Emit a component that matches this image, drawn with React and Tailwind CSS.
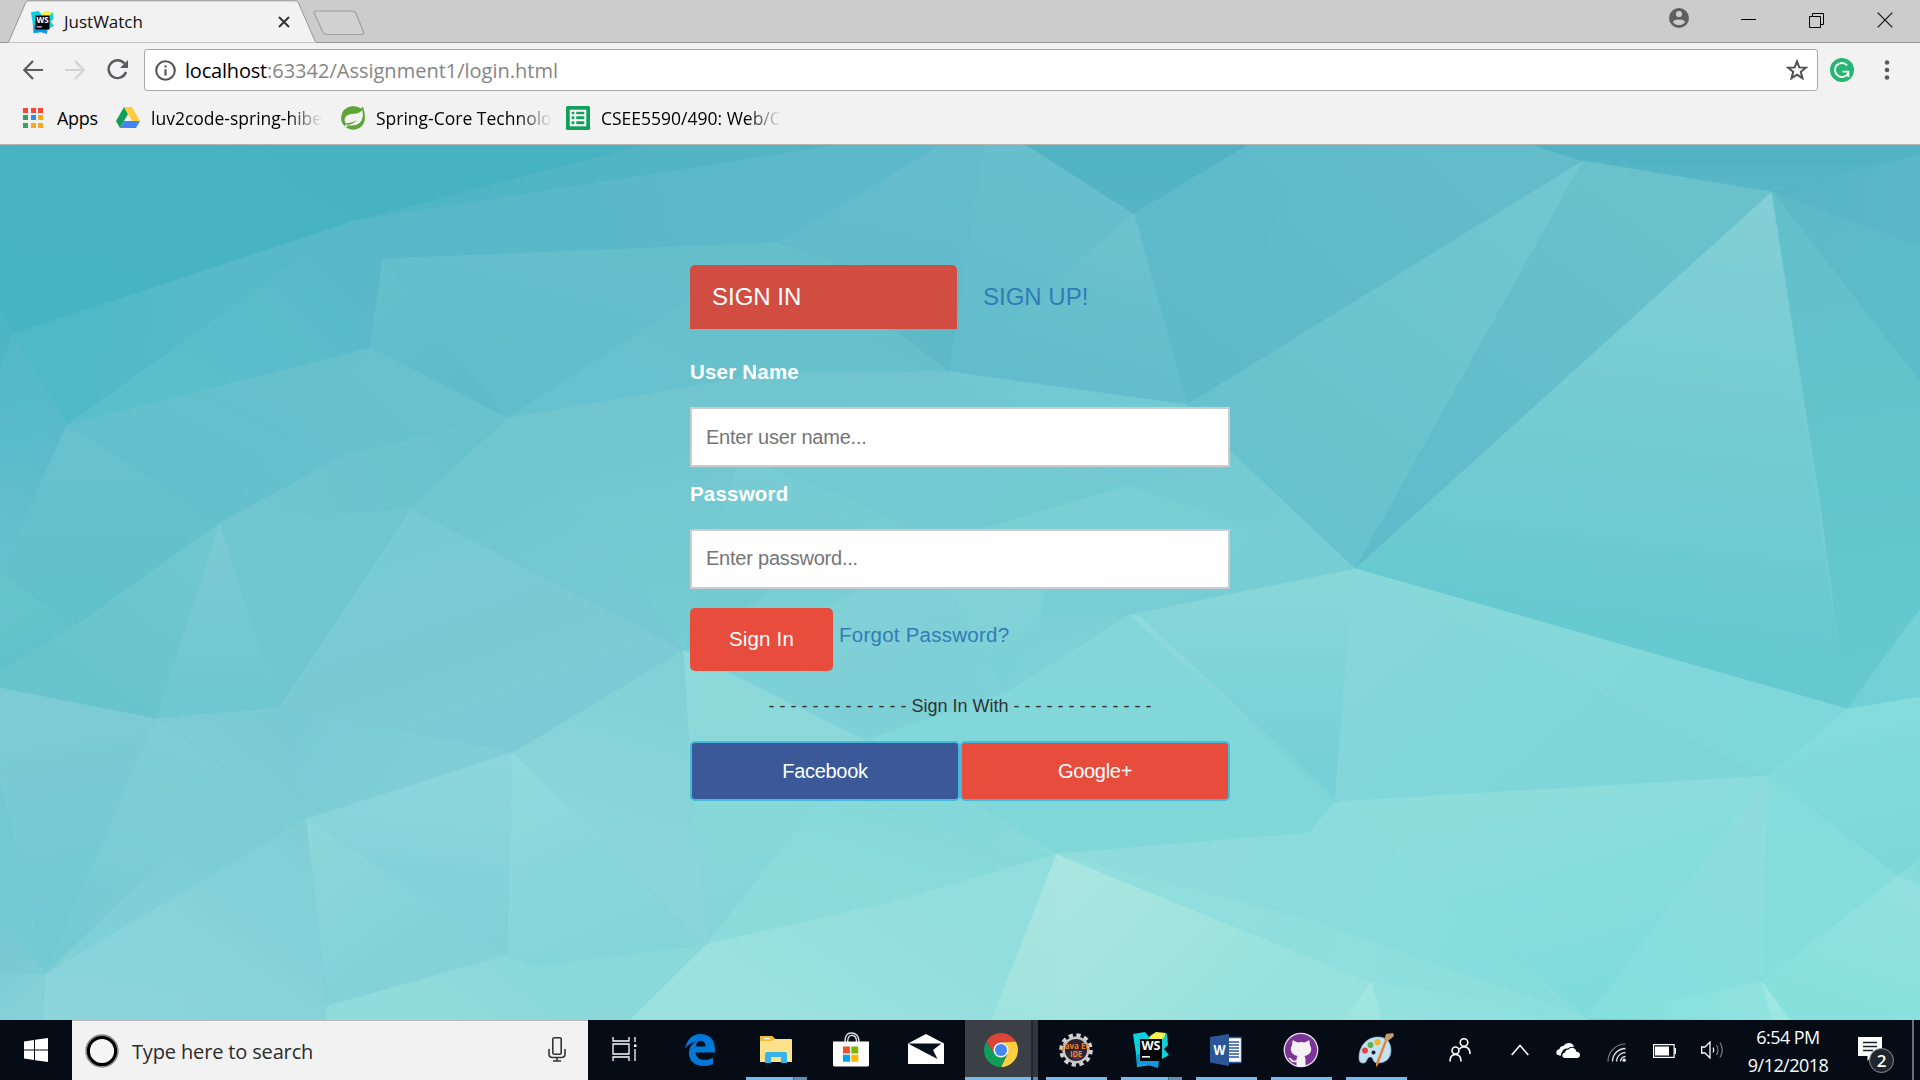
import React from "react";

/* Facets of the low-poly wallpaper: points, gradient line, start and end colour. */
const FACETS = [
  ["0,145 646,145 355,221 13,334 0,333", [300, 145, 60, 330], "#47b2c1", "#4ab6c4"],
  ["0,145 205,145 355,221 13,334 0,333", [100, 145, 60, 330], "#48b3c2", "#46b4c3"],
  ["0,305 13,334 0,333", [0, 305, 13, 334], "#4cb6c5", "#4cb6c5"],
  ["0,333 13,334 0,372", [0, 333, 8, 370], "#4bb4c3", "#50b7c6"],
  ["646,145 840,145 355,221", [640, 145, 500, 200], "#53b5c4", "#50b5c5"],
  ["355,221 840,145 942,145 778,243 383,259", [850, 150, 400, 250], "#5cb9c9", "#58b8c8"],
  ["942,145 985,145 960,303 949,372 778,243", [940, 160, 900, 340], "#65bdcc", "#5fbaca"],
  ["778,243 960,300 949,372", [800, 250, 950, 370], "#63bdcb", "#5cb8c8"],
  ["984,145 1027,145 1134,214 949,372 960,303", [1040, 150, 950, 370], "#68bfcc", "#62bccb"],
  ["1027,145 1248,145 1134,214", [1130, 145, 1130, 214], "#50b2c2", "#55b5c5"],
  ["1248,145 1535,145 1583,161 1187,405 1134,214", [1400, 145, 1200, 400], "#61bccb", "#5cb9c8"],
  ["1312,145 1535,145 1583,161 1255,363 1262,252", [1450, 150, 1240, 350], "#62bcca", "#5ebac9"],
  ["1134,214 1187,405 949,372", [1130, 220, 1080, 400], "#6dc2cd", "#62bccb"],
  ["1535,145 1920,145 1920,247 1772,192 1583,161", [1750, 145, 1750, 200], "#50b2c3", "#5ab8c7"],
  ["1772,192 1920,155 1920,247", [1780, 190, 1920, 200], "#56b5c5", "#5ab8c8"],
  ["1583,161 1187,405 1230,451 1355,569", [1580, 161, 1300, 520], "#73c7d0", "#66c2cd"],
  ["1583,161 1772,192 1355,569", [1650, 200, 1380, 560], "#69c1cb", "#5ebccb"],
  ["1772,192 1355,569 1847,709", [1740, 200, 1680, 660], "#82cfd5", "#65c9cf"],
  ["1772,192 1920,247 1920,382", [1800, 200, 1920, 340], "#5cbac8", "#5dbcc9"],
  ["1772,192 1920,382 1920,609 1847,709 1820,500", [1800, 240, 1870, 680], "#62c0ca", "#65c9cf"],
  ["1847,709 1920,609 1920,697", [1847, 709, 1920, 640], "#70d0d5", "#74d1d6"],
  ["67,425 13,334 0,370 0,465", [10, 340, 30, 450], "#54b8c7", "#5abccb"],
  ["13,334 355,221 67,425", [100, 300, 220, 320], "#50b9c7", "#58bac8"],
  ["355,221 383,259 370,348 67,425", [350, 230, 200, 390], "#59b8c8", "#5bbecb"],
  ["383,259 370,348 508,418", [380, 270, 480, 400], "#64c0cb", "#5dbac9"],
  ["383,259 778,243 508,418", [560, 240, 510, 418], "#65bfcb", "#60bdcb"],
  ["778,243 949,372 771,373 508,418", [780, 250, 700, 400], "#66c0cb", "#66c2ce"],
  ["508,418 771,373 949,372 1187,405 1230,451 1355,569 1130,486 1040,620 684,650 411,509", [700, 400, 750, 640], "#70c5cf", "#78ccd3"],
  ["370,348 67,425 220,523", [300, 360, 220, 520], "#66c1cc", "#62c0cd"],
  ["370,348 508,418 345,455 220,523", [400, 370, 250, 520], "#68c2cd", "#64c0cd"],
  ["508,418 411,509 220,523 345,455", [480, 430, 260, 520], "#68c2ce", "#70c5d0"],
  ["67,425 0,465 0,575 70,440", [50, 430, 10, 550], "#5abac9", "#64c1ce"],
  ["67,425 220,523 77,625 0,575", [100, 440, 100, 610], "#67c2cd", "#61c1cb"],
  ["0,575 77,625 0,672", [0, 575, 40, 650], "#66c5cd", "#62c2cb"],
  ["220,523 77,625 0,672 0,688 156,719", [210, 530, 80, 700], "#70c7d0", "#67c4cc"],
  ["220,523 156,719 279,708", [220, 530, 220, 710], "#7ccad4", "#6ec7d1"],
  ["220,523 411,509 279,708", [330, 515, 270, 700], "#70c5d0", "#6fc7d1"],
  ["411,509 684,650 513,753 279,708", [420, 520, 500, 740], "#78cbd4", "#7ccad5"],
  ["508,418 684,650 411,509", [508, 420, 620, 620], "#70c5d0", "#76c9d2"],
  ["0,688 156,719 46,974 0,780", [20, 690, 60, 940], "#7ecbd5", "#72c9d3"],
  ["0,780 46,974 0,912", [0, 790, 30, 960], "#74c8d3", "#74cad4"],
  ["156,719 279,708 513,753 306,819 46,974", [300, 720, 100, 940], "#7acad4", "#80d0d7"],
  ["156,719 240,782 46,974", [160, 730, 80, 950], "#7fced6", "#76cad3"],
  ["279,708 513,753 306,819", [300, 710, 420, 790], "#78cad4", "#80cfd7"],
  ["513,753 306,819 508,955", [500, 760, 480, 940], "#8cd7dc", "#80d0d8"],
  ["306,819 328,1006 508,955", [310, 830, 400, 960], "#8bd7da", "#82d2d8"],
  ["306,819 46,974 328,1020", [300, 830, 180, 1000], "#80cfd7", "#88d4da"],
  ["0,973 46,974 44,1020 0,1020", [0, 970, 40, 1020], "#80cfd6", "#84d1d7"],
  ["0,912 46,974 0,974", [0, 912, 20, 974], "#76c8d2", "#7acbd4"],
  ["46,974 330,1006 325,1020 44,1020", [50, 980, 300, 1010], "#8dd5db", "#86d3d9"],
  ["328,1006 508,955 536,966 707,944 630,1020 325,1020", [500, 960, 450, 1020], "#89d8da", "#90dbdc"],
  ["513,753 707,944 536,966 508,955", [520, 760, 600, 950], "#8edadd", "#84d5d9"],
  ["684,650 513,753 707,944", [680, 660, 620, 850], "#80d1d6", "#8ad6da"],
  ["684,650 866,740 707,944 692,780", [690, 660, 740, 900], "#8fdadb", "#84d6d8"],
  ["738,467 771,445 1040,616 1130,615 1006,693 866,740 684,650", [780, 480, 850, 720], "#75cbd3", "#7ed1d7"],
  ["750,430 770,467 860,530 684,650 700,580", [740, 450, 750, 620], "#79ccd3", "#72cad1"],
  ["770,467 985,467 1128,486 985,528 925,528", [850, 460, 1000, 530], "#73c9d1", "#72cad1"],
  ["949,372 1187,405 1230,451 1128,486 949,372", [1000, 380, 1150, 480], "#72c8d0", "#74cad2"],
  ["1128,486 1230,520 1355,569 1130,615 1040,616 985,528", [1100, 490, 1200, 600], "#7acfd4", "#76cdd3"],
  ["860,590 950,590 985,693 866,740 760,640", [870, 590, 920, 720], "#80d0d7", "#7cd0d6"],
  ["950,590 1045,590 1040,616 1006,693", [960, 590, 1000, 690], "#82d2d7", "#7bd1d6"],
  ["1355,569 1130,615 1335,802", [1300, 590, 1300, 790], "#87d7d9", "#74cfd6"],
  ["1355,569 1847,709 1769,776 1335,802 1348,634", [1400, 590, 1560, 780], "#86d7d9", "#7ed6d9"],
  ["1355,569 1847,709 1769,776", [1500, 600, 1750, 760], "#86d8d9", "#7ed7d9"],
  ["1847,709 1920,697 1920,858 1898,876 1769,776", [1850, 720, 1880, 860], "#84dcdc", "#7dd7d9"],
  ["1130,615 1335,802 1309,833 1057,854 866,740 1006,693", [1120, 620, 1130, 850], "#84d7d9", "#80d7d8"],
  ["866,740 1057,854 885,904 707,944", [880, 750, 830, 910], "#84d7d9", "#8cdbdb"],
  ["866,740 1057,854 1000,854 840,790", [900, 760, 1020, 850], "#82d7d8", "#88dada"],
  ["707,944 885,904 1057,854 992,1020 630,1020", [900, 880, 800, 1020], "#92dddd", "#9ae1df"],
  ["1057,854 1371,982 1345,1020 992,1020", [1060, 860, 1230, 1020], "#abe6e1", "#98e2dd"],
  ["1057,854 1056,1020 992,1020", [1050, 870, 1020, 1020], "#a9e5e1", "#a0e3de"],
  ["1057,854 1309,833 1335,802 1587,1018 1371,982", [1150, 850, 1500, 1000], "#8fdbdd", "#86dddc"],
  ["1057,854 1310,920 1587,1018 1371,982", [1100, 870, 1450, 1000], "#92dddd", "#8cdfdd"],
  ["1335,802 1769,776 1587,1018", [1500, 790, 1560, 1000], "#8edddd", "#80dcdb"],
  ["1769,776 1762,982 1587,1018", [1769, 790, 1640, 1000], "#90dcdd", "#86dedd"],
  ["1769,776 1898,876 1762,982", [1780, 790, 1800, 960], "#86dbdb", "#84dedc"],
  ["1898,876 1920,858 1920,885", [1898, 876, 1920, 870], "#8adddd", "#84dada"],
  ["1898,876 1920,885 1920,1020 1790,1020 1762,982", [1890, 890, 1850, 1010], "#92e0e0", "#88e0dd"],
  ["1371,982 1587,1018 1587,1020 1382,1020", [1380, 990, 1550, 1020], "#92e1df", "#8adfdd"],
  ["1371,982 1382,1020 1345,1020", [1371, 982, 1370, 1020], "#a4e7e2", "#9de4df"],
  ["1587,1018 1762,982 1775,1020", [1600, 1018, 1760, 1000], "#84dfdd", "#90e2df"],
  ["1762,982 1790,1020 1772,1020", [1762, 982, 1780, 1020], "#a2e8e3", "#9be6e1"],
  ["1130,615 1140,617 1340,802 1335,802", [1130, 615, 1300, 780], "#90dbdc", "#7cd3d8"],
];

function Wallpaper() {
  return (
    <svg className="absolute inset-0 h-full w-full" viewBox="0 145 1920 875" preserveAspectRatio="none" aria-hidden="true">
      <defs>
        {FACETS.map(([, l, a, b], i) => (
          <linearGradient key={i} id={"f" + i} gradientUnits="userSpaceOnUse" x1={l[0]} y1={l[1]} x2={l[2]} y2={l[3]}>
            <stop offset="0" stopColor={a} />
            <stop offset="1" stopColor={b} />
          </linearGradient>
        ))}
      </defs>
      <rect x="0" y="145" width="1920" height="875" fill="#78cdd4" />
      {FACETS.map(([p], i) => (
        <polygon key={i} points={p} fill={`url(#f${i})`} stroke={`url(#f${i})`} strokeWidth="0.8" />
      ))}
    </svg>
  );
}

function WebStorm({ className }) {
  return (
    <svg className={className} viewBox="0 0 36 36">
      <path d="M0 2 L12 0 L17 6 L28 8 L25 34 L18 33 L4 35 L3 22 Z" fill="#0bd0df" />
      <path d="M4 22 L26 24 L25 36 L15 33 L4 34Z" fill="#1297e6" />
      <path d="M17 4 L23 0 L33 1 L30 11 L15 9Z" fill="#f4f04f" />
      <path d="M28 9 L34 1 L35 13 L31 17 L36 23 L29 27Z" fill="#12cfd8" />
      <rect x="7" y="7" width="22" height="22" fill="#050505" />
      <text x="8.5" y="18" fontFamily="Open Sans, sans-serif" fontWeight="700" fontSize="12.5" textLength="19" lengthAdjust="spacingAndGlyphs" fill="#fff">WS</text>
      <rect x="9" y="24" width="8" height="1.6" fill="#fff" />
    </svg>
  );
}

function Tab() {
  return (
    <div className="relative h-[43px] w-[318px] shrink-0">
      <svg className="absolute left-0 top-0" width="318" height="43" viewBox="0 0 318 43">
        <path d="M0 43 L0 42.5 L7 42.5 Q8.500 42.500 9 41 L25.500 3 Q26.500 .8 29 .8 L295 .8 Q297.500 .8 298.500 3 L315 41 Q316 42.500 318 42.500 L318 43Z" fill="#f2f2f2" stroke="#969696" />
      </svg>
      <div className="relative flex h-[43px] items-center pl-[31px] pr-[28px]">
        <WebStorm className="mt-[1px] h-[23px] w-[23px]" />
        <span className="ml-[10px] grow font-['Open_Sans'] text-[17px] leading-[20px] text-[#111]">JustWatch</span>
        <svg width="12" height="12" viewBox="0 0 12 12" className="mt-[1px] mr-0">
          <path d="M1 1 L11 11 M11 1 L1 11" stroke="#333" strokeWidth="2" />
        </svg>
      </div>
    </div>
  );
}

function TabStrip() {
  return (
    <div className="flex h-[43px] items-start bg-[#cccccc] shadow-[inset_0_-1px_0_#969696]">
      <Tab />
      <svg width="52" height="26" viewBox="0 0 52 26" className="-ml-[5px] mt-[10px] shrink-0">
        <path d="M3 1 H39 Q42 1 43 3.500 L50.500 22 Q51.500 24.500 48.500 24.500 H14 Q11 24.500 10 22.500 L1.500 3.500 Q.8 1 3 1Z" fill="#d1d1d1" stroke="#a0a0a0" strokeWidth="1.2" />
      </svg>
      <div className="grow" />
      <svg width="20" height="20" viewBox="0 0 20 20" className="mt-[8px] shrink-0">
        <circle cx="10" cy="10" r="10" fill="#5f5f5f" />
        <circle cx="10" cy="6" r="3.100" fill="#ccc" />
        <path d="M4 14.200 Q4.500 11.500 10 11.400 Q15.500 11.500 16 14.200 Q14 17 10 17 Q6 17 4 14.200Z" fill="#ccc" />
      </svg>
      <svg width="15" height="1" viewBox="0 0 15 1" className="ml-[52px] mt-[19px] shrink-0"><rect width="15" height="1" fill="#000" /></svg>
      <svg width="15" height="15" viewBox="0 0 15 15" className="ml-[53px] mt-[13px] shrink-0">
        <path d="M.5 3.500 H11.500 V14.500 H.5Z M3.500 3.500 V.5 H14.500 V11.500 H11.500" fill="none" stroke="#000" />
      </svg>
      <svg width="16" height="16" viewBox="0 0 16 16" className="ml-[53px] mr-[27px] mt-[12px] shrink-0">
        <path d="M.7 .7 L15.300 15.300 M15.300 .7 L.7 15.300" stroke="#111" strokeWidth="1.200" />
      </svg>
    </div>
  );
}

function Toolbar() {
  return (
    <div className="flex h-[55px] items-center pb-[1px]">
      <svg width="20" height="20" viewBox="0 0 20 20" className="ml-[23px] shrink-0">
        <path d="M20 10 H1.500 M10 1 L1.300 10 L10 19" fill="none" stroke="#5a5a5e" strokeWidth="2.200" />
      </svg>
      <svg width="20" height="20" viewBox="0 0 20 20" className="ml-[22px] shrink-0">
        <path d="M0 10 H18.500 M10 1 L18.700 10 L10 19" fill="none" stroke="#d3d3d3" strokeWidth="2.200" />
      </svg>
      <svg width="22" height="22" viewBox="0 0 22 22" className="ml-[22px] shrink-0">
        <path d="M17.500 4.600 A8.900 8.900 0 1 0 19 13" fill="none" stroke="#5a5a5e" strokeWidth="2.400" />
        <path d="M21 1 V9 H13Z" fill="#5a5a5e" />
      </svg>
      <div className="ml-[15px] flex h-[42px] w-[1674px] shrink-0 items-center rounded-[3px] border border-[#a9a9a9] bg-white pl-[10px] pr-[9px]">
        <svg width="21" height="21" viewBox="0 0 21 21" className="shrink-0">
          <circle cx="10.500" cy="10.500" r="9.300" fill="none" stroke="#555" strokeWidth="2.100" />
          <path d="M10.500 9.300 V15.500 M10.500 5.500 V7.600" stroke="#555" strokeWidth="2.200" />
        </svg>
        <div className="ml-[9px] mt-[2px] grow whitespace-nowrap font-['Open_Sans'] text-[20px] leading-[28px] text-[#858585]">
          <span className="tracking-[-0.2px] text-black">localhost</span>:63342/Assignment1/login.html
        </div>
        <svg width="22" height="22" viewBox="0 0 22 22" className="shrink-0">
          <path d="M11 2.500 L13.300 8.400 L19.800 8.700 L14.800 12.800 L16.500 19.200 L11 15.700 L5.500 19.200 L7.200 12.800 L2.200 8.700 L8.700 8.400Z" fill="none" stroke="#4f4f4f" strokeWidth="2" />
        </svg>
      </div>
      <svg width="24" height="24" viewBox="0 0 24 24" className="ml-[12px] shrink-0">
        <circle cx="12" cy="12" r="12" fill="#26b673" />
        <path d="M17.200 7.300 A7 7 0 1 0 18 15.500 M12.500 13.600 H18.300 V19" fill="none" stroke="#fff" strokeWidth="1.900" />
      </svg>
      <svg width="6" height="20" viewBox="0 0 6 20" className="ml-[30px] shrink-0" fill="#5c5c60">
        <circle cx="3" cy="2.500" r="2.300" /><circle cx="3" cy="10" r="2.300" /><circle cx="3" cy="17.500" r="2.300" />
      </svg>
    </div>
  );
}

function Bookmark({ icon, label, className }) {
  return (
    <div className={`flex shrink-0 items-center ${className}`}>
      {icon}
      <span className="ml-[11px] whitespace-nowrap font-['Open_Sans'] text-[17.5px] leading-[26px] text-black [mask-image:linear-gradient(to_right,black_calc(100%-34px),transparent)]">{label}</span>
    </div>
  );
}

const APP_DOTS = ["#fb4336", "#fb4336", "#fb4336", "#35a35a", "#2490f5", "#f5aa1c", "#35a35a", "#f5aa1c", "#f5aa1c"];

function Bookmarks() {
  return (
    <div className="flex h-[47px] items-center border-b border-[#b5b5b5] pb-[7px] pl-[23px]">
      <div className="grid grid-cols-3 gap-[2.500px]">
        {APP_DOTS.map((c, i) => (
          <svg key={i} width="5" height="5" viewBox="0 0 5 5"><rect width="5" height="5" fill={c} /></svg>
        ))}
      </div>
      <span className="ml-[14px] w-[59px] font-['Open_Sans'] text-[18px] leading-[26px] tracking-[-0.3px]">Apps</span>
      <Bookmark className="w-[205px]" label="luv2code-spring-hibe" icon={
        <svg width="24" height="21" viewBox="0 0 24 21" className="shrink-0">
          <path d="M8 0 L12 7 L4 21 L0 14Z" fill="#119e58" />
          <path d="M8 0 H16 L24 14 H16Z" fill="#fdcc40" />
          <path d="M8 14 H24 L20 21 H4Z" fill="#4384f3" />
        </svg>} />
      <Bookmark className="ml-[20px] w-[206px]" label="Spring-Core Technolo" icon={
        <svg width="24" height="24" viewBox="0 0 24 24" className="shrink-0">
          <path d="M12 0 Q17 0 20 2.500 L22 .5 Q24 6 24 12 Q23.500 19 18.500 22 Q12 25.500 6 22 Q0 18 0 12 Q.5 1.500 12 0Z" fill="#5fa436" />
          <path d="M21.500 4 Q23 14 18 17.500 Q14 20.500 6 19 Q12 18.500 16 14 Q10 18 4.500 17 Q2 12.500 6 9.500 Q8 8 13 7.800 Q18.500 7.500 21.500 4Z" fill="#f2f2f2" />
          <circle cx="5.300" cy="19.800" r="1.200" fill="#f2f2f2" />
        </svg>} />
      <Bookmark className="ml-[19px] w-[206px]" label="CSEE5590/490: Web/C" icon={
        <svg width="24" height="24" viewBox="0 0 24 24" className="shrink-0">
          <rect width="24" height="24" rx="1.500" fill="#12a05b" />
          <path d="M4.700 4.700 H19.300 V19.300 H4.700Z M4.700 9.300 H19.300 M4.700 14.300 H19.300 M9.300 4.700 V19.300" fill="none" stroke="#fff" strokeWidth="1.900" />
        </svg>} />
    </div>
  );
}

function LoginPage() {
  const label = "text-[20.5px] font-bold leading-[28px] tracking-[0.2px] text-white";
  const input = "block h-[60px] w-full border-2 border-[#ccc] bg-white px-[14px] text-[20px] tracking-[-0.22px] text-[#555] placeholder:text-[#757575] outline-none";
  return (
    <main className="relative h-[875px] overflow-hidden">
      <Wallpaper />
      <form className="relative mx-auto flex w-[540px] flex-col pt-[120px] [font-family:'Liberation_Sans',Arial,sans-serif]" onSubmit={(e) => e.preventDefault()}>
        <div className="flex h-[64px] gap-[3px] text-[24px] leading-[64px]">
          <a className="w-[267px] rounded-t-[5px] bg-[#d14d42] pl-[22px] text-white">SIGN IN</a>
          <a className="w-[270px] pl-[23px] text-[#337ab7]">SIGN UP!</a>
        </div>
        <label className={`mt-[29px] ${label}`}>User Name</label>
        <input className={`mt-[21px] ${input}`} placeholder="Enter user name..." />
        <label className={`mt-[13px] ${label}`}>Password</label>
        <input className={`mt-[21px] pb-[2px] ${input}`} placeholder="Enter password..." />
        <div className="mt-[19px] flex h-[63px] items-start">
          <button className="h-[63px] w-[143px] rounded-[5px] bg-[#e74c3c] text-[20.5px] tracking-[0.2px] text-white">Sign In</button>
          <a className="ml-[6px] mt-[13px] text-[20.5px] leading-[28px] tracking-[0.25px] text-[#337ab7]">Forgot Password?</a>
        </div>
        <div className="mt-[23px] whitespace-pre text-center text-[18px] leading-[25px] text-[#333]">- - - - - - - - - - - - - Sign In With - - - - - - - - - - - - -</div>
        <div className="mt-[22px] flex text-[20px] text-white">
          <button className="h-[60px] w-[270px] rounded-[5px] border-2 border-[#46b8da] bg-[#3b5998] tracking-[-0.3px]">Facebook</button>
          <button className="h-[60px] w-[270px] rounded-[5px] border-2 border-[#46b8da] bg-[#e74c3c] tracking-[-0.3px]">Google+</button>
        </div>
      </form>
    </main>
  );
}

/* A 75px taskbar slot; `bar` chooses the running indicator under the icon. */
function Slot({ bar, children }) {
  return (
    <div className="flex h-full w-[75px] shrink-0 flex-col items-center">
      <div className="flex h-[57px] w-full items-center justify-center">{children}</div>
      {bar && (
        <div className="ml-px flex h-[3px] w-[61px] bg-[#76b9ed]">
          {bar === "multi" && <div className="ml-auto h-full w-[14px] border-l border-[#436c8c] bg-[#5f8fb6]" />}
        </div>
      )}
    </div>
  );
}

function EdgeIcon() {
  return (
    <svg width="30" height="32" viewBox="0 0 30 32" className="mt-[3px] mr-[2px]">
      <path d="M0 14.500 C2 5 8 0 15.500 0 C25 0 30 6.500 30 15 V18.500 H10.500 C11 23.500 15 26 19.500 26 C23 26 26 25 28 23.800 V30 C25.500 31.300 22 32 18.500 32 C10 32 4 27 4 19 C4 14 6.500 10 11 7.500 C6 8.500 2.500 11.500 0 14.500Z M10.800 12.500 H20.500 C20.500 9 18.500 6.800 15.700 6.800 C13 6.800 11.200 9 10.800 12.500Z" fill="#0078d7" fillRule="evenodd" />
    </svg>
  );
}

function FolderIcon() {
  return (
    <svg width="32" height="28" viewBox="0 0 32 28" className="mt-[2px]">
      <path d="M0 1 Q0 0 1 0 H12 L15 3 H31 Q32 3 32 4 V26 H0Z" fill="#fde28b" />
      <path d="M0 1 Q0 0 1 0 H12 L15 3 L12 5 H0Z" fill="#f3bd33" />
      <rect x="4" y="2" width="6" height="1.300" fill="#fff" />
      <path d="M5 27 V18 Q5 16 7 16 H25 Q27 16 27 18 V27 H21 V21 H11 V27Z" fill="#38b4ea" />
    </svg>
  );
}

function StoreIcon() {
  return (
    <svg width="36" height="35" viewBox="0 0 36 35" className="mt-[1px]">
      <path d="M12 10 C12 4 14 1 18 1 C23 1 26 4 26 10 M14.500 10 C15 4 17 3 20 3.500 C23 4 23.500 6 23.500 10" fill="none" stroke="#e5e5e5" strokeWidth="1.300" />
      <path d="M0 9.500 H36 V33 Q36 34.500 34 34.500 H2 Q0 34.500 0 33Z" fill="#fff" />
      <rect x="10" y="14.500" width="7" height="7" fill="#f0502a" /><rect x="18.300" y="14.500" width="7" height="7" fill="#7fb800" />
      <rect x="10" y="22.700" width="7" height="7" fill="#00a3ee" /><rect x="18.300" y="22.700" width="7" height="7" fill="#fdb900" />
    </svg>
  );
}

function MailIcon() {
  return (
    <svg width="36" height="30" viewBox="0 0 36 30">
      <path d="M18 0 L36 9.500 V30 H0 V9.500Z" fill="#fff" />
      <path d="M0 9.500 H33.500 L25 16 L29.500 25 L17 18.500Z" fill="#07101a" />
    </svg>
  );
}

function ChromeIcon() {
  return (
    <svg width="34" height="34" viewBox="-17 -17 34 34" className="mt-[3px]">
      <path d="M-14.700 -8.500 A17 17 0 0 1 14.700 -8.500 L0 -7.500 L-6.500 3.700Z" fill="#db4437" />
      <path d="M14.700 -8.500 A17 17 0 0 1 0 17 L6.500 3.700 L0 -7.500Z" fill="#fdcd42" />
      <path d="M0 17 A17 17 0 0 1 -14.700 -8.500 L-6.500 3.700 L6.500 3.700Z" fill="#109d58" />
      <circle r="7.600" fill="#f1f1f1" /><circle r="6" fill="#4486f4" />
    </svg>
  );
}

function JavaEEIcon() {
  return (
    <svg width="34" height="34" viewBox="-17 -17 34 34" className="mt-[2px]">
      <circle r="14.800" fill="none" stroke="#d2d2d2" strokeWidth="4" strokeDasharray="4.200 3.549" />
      <circle r="12.300" fill="#292431" stroke="#c6c6c6" strokeWidth="2.400" />
      <circle cx="1" cy="5" r="5" fill="#443660" />
      <text y="-1" textAnchor="middle" textLength="28" lengthAdjust="spacingAndGlyphs" fontFamily="Open Sans, sans-serif" fontSize="8.500" fontWeight="700" fill="#ef7d20">Java EE</text>
      <text y="7" textAnchor="middle" textLength="12" lengthAdjust="spacingAndGlyphs" fontFamily="Open Sans, sans-serif" fontSize="8.500" fontWeight="700" fill="#f58322">IDE</text>
    </svg>
  );
}

function WordIcon() {
  return (
    <svg width="32" height="32" viewBox="0 0 32 32" className="mt-[3px]">
      <rect x="17" y="3.500" width="14.500" height="25" rx="1" fill="#fff" stroke="#2b579a" strokeWidth="1.300" />
      <path d="M19 8 H29 M19 11 H29 M19 14 H29 M19 17 H29 M19 20 H29 M19 23 H29" stroke="#2b579a" strokeWidth="1.500" />
      <path d="M0 3 L19 0 V32 L0 28.500Z" fill="#2b579a" />
      <text x="9.500" y="21" textAnchor="middle" fontFamily="Open Sans, sans-serif" fontWeight="700" fontSize="14" textLength="12" lengthAdjust="spacingAndGlyphs" fill="#fff">W</text>
    </svg>
  );
}

function GithubIcon() {
  return (
    <svg width="36" height="36" viewBox="0 0 36 36" className="mt-[2px]">
      <circle cx="18" cy="18" r="16.700" fill="#7c3498" stroke="#e6dfe9" strokeWidth="1.300" />
      <path d="M9.500 9 Q9.500 8 10.500 8.500 L14.500 10.500 Q18 9.500 21.500 10.500 L25.500 8.500 Q26.500 8 26.500 9 L27 13.500 Q29.500 17 27 21 Q25 23.500 21.500 24 Q22.500 25.500 22.500 28 V34 Q18 35.500 13.500 34 V30 Q9 31 7.500 28.500 Q6.500 26.500 5 26 Q7.500 25 9 27.500 Q10.500 29.500 13.500 28 Q13.500 25.500 14.500 24 Q11 23.500 9 21 Q6.500 17 9 13.500Z" fill="#f5f2f6" />
    </svg>
  );
}

function PaintIcon() {
  return (
    <svg width="36" height="36" viewBox="0 0 36 36">
      <path d="M1 27 C1 15 9 6 20 6 C29 6 33 12 33 19 C33 28 27 32 20 32 C13 32 17 26 12 26 C8 26 10 33 4 32 C1.500 31.500 1 29 1 27Z" fill="#c3dff2" stroke="#86b8dc" strokeWidth=".7" />
      <circle cx="15.500" cy="21.500" r="2" fill="#122436" />
      <circle cx="7" cy="19.500" r="2.900" fill="#e0433c" /><circle cx="12.500" cy="14" r="2.900" fill="#5fb14a" /><circle cx="19.500" cy="11" r="3.100" fill="#f2b52e" />
      <path d="M27 9 L29 10 L20 34 L18 36 Q17.500 33 18.500 31Z" fill="#e3812c" />
      <path d="M26 9 L28 3 L35 2 L36 5 L30 10Z" fill="#c79c6c" />
    </svg>
  );
}

function Taskbar() {
  return (
    <footer className="flex h-[60px] bg-[#050c15] font-['Open_Sans'] text-white">
      <div className="flex w-[72px] shrink-0 items-center pl-[24px]">
        <svg width="24" height="24" viewBox="0 0 24 24" fill="#fff">
          <path d="M0 3.500 L10 2 V11.400 H0Z M11 1.800 L24 0 V11.400 H11Z M0 12.500 H10 V22 L0 20.500Z M11 12.500 H24 V24 L11 22.200Z" />
        </svg>
      </div>
      <div className="flex w-[516px] shrink-0 items-center border-t border-[#b9b9b9] bg-[#f2f2f2] pl-[13px] pr-[22px]">
        <svg width="34" height="34" viewBox="0 0 34 34" className="shrink-0">
          <circle cx="17" cy="17" r="15.500" fill="none" stroke="#8a8a8a" strokeWidth="2.500" />
          <circle cx="17" cy="17" r="13.600" fill="#f5f5f5" stroke="#000" strokeWidth="3" />
        </svg>
        <span className="ml-[13px] mt-[3px] grow text-[20px] leading-[28px] tracking-[-0.15px] text-[#2b2b2b]">Type here to search</span>
        <svg width="18" height="25" viewBox="0 0 18 25" fill="none" stroke="#333" strokeWidth="1.600" className="-mt-[2px] shrink-0">
          <rect x="4.800" y=".8" width="8.400" height="16.400" rx="1.500" />
          <path d="M1 12 V17 Q1 20.500 4.500 20.500 H13.500 Q17 20.500 17 17 V12 M9 20.500 V24 M5 24 H13" />
        </svg>
      </div>
      <Slot>
        <svg width="25" height="24" viewBox="0 0 25 24" fill="none" stroke="#fff" strokeWidth="1.300" className="mr-[3px] mt-[1px]">
          <path d="M1 0 V4 H17 V0 M1 24 V20 H17 V24 M1 7 H17 V17 H1Z M23 0 V5 M23 12 V24" />
          <rect x="22" y="7.500" width="2.500" height="2.500" fill="#fff" stroke="none" />
        </svg>
      </Slot>
      <Slot><EdgeIcon /></Slot>
      <Slot bar="multi"><FolderIcon /></Slot>
      <Slot><StoreIcon /></Slot>
      <Slot><MailIcon /></Slot>
      <div className="ml-[2px] flex w-[73px] shrink-0">
        <div className="flex h-full w-[66px] flex-col">
          <div className="flex h-[57px] items-center justify-center bg-[#3b4046] pl-[6px]"><ChromeIcon /></div>
          <div className="h-[3px] bg-[#76b9ed]" />
        </div>
        <div className="flex h-full w-[7px] flex-col border-l-2 border-[#20262d]">
          <div className="h-[57px] bg-[#32373d]" />
          <div className="h-[3px] bg-[#5f8fb6]" />
        </div>
      </div>
      <Slot bar="one"><JavaEEIcon /></Slot>
      <Slot bar="multi"><WebStorm className="ml-[1px] mt-[3px] h-[36px] w-[36px]" /></Slot>
      <Slot bar="one"><WordIcon /></Slot>
      <Slot bar="one"><GithubIcon /></Slot>
      <Slot bar="one"><PaintIcon /></Slot>
      <div className="flex grow items-center pl-[36px]">
        <svg width="22" height="24" viewBox="0 0 22 24" fill="none" stroke="#fff" strokeWidth="1.600" className="shrink-0">
          <circle cx="15" cy="4.500" r="3.800" /><circle cx="6.500" cy="12.500" r="3.500" />
          <path d="M1 23.500 Q1 16.500 6.500 16.500 Q12 16.500 12 23.500 M10.500 11 Q12 8.800 15 8.800 Q21 9 21 16" />
        </svg>
        <svg width="18" height="12" viewBox="0 0 18 12" className="ml-[40px] shrink-0"><path d="M.7 11 L9 1.500 L17.300 11" fill="none" stroke="#fff" strokeWidth="1.500" /></svg>
        <svg width="24" height="15" viewBox="0 0 24 15" className="ml-[27px] shrink-0" fill="#fff">
          <path d="M5 12.500 H3.500 Q0 12 .3 9 Q.7 6.500 3.500 6 Q4 3 7.500 3 Q9.500 0 13 0 Q17 .2 18 4 Q14 3 12 5.500 Q7 5 6.200 9 Q4.500 10 5 12.500Z" />
          <path d="M9 15 Q6 14.500 6.300 12 Q6.700 9.800 9 9.500 Q9.500 6.500 12.500 6.500 Q14.500 4 17.500 5 Q20 6 20.500 8.700 Q24 9 24 12 Q23.700 14.800 21 15Z" />
        </svg>
        <svg width="19" height="19" viewBox="0 0 19 19" className="ml-[27px] mt-[4px] shrink-0" fill="none">
          <path d="M1 18.500 A17.500 17.500 0 0 1 18.500 1" stroke="#777c82" strokeWidth="1.200" />
          <path d="M5.500 18.500 A13 13 0 0 1 18.500 5.500 M9.500 18.500 A9 9 0 0 1 18.500 9.500 M13.500 18.500 A5 5 0 0 1 18.500 13.500" stroke="#e5e5e5" strokeWidth="1.300" />
          <circle cx="17.200" cy="17.200" r="1.600" fill="#fff" />
        </svg>
        <svg width="23" height="14" viewBox="0 0 23 14" className="ml-[27px] mt-[2px] shrink-0">
          <rect x=".6" y=".6" width="20.500" height="12.800" fill="none" stroke="#fff" strokeWidth="1.200" />
          <rect x="2" y="2.500" width="14" height="9" fill="#fff" /><rect x="21.500" y="4" width="1.500" height="6" fill="#fff" />
        </svg>
        <svg width="23" height="18" viewBox="0 0 23 18" className="ml-[25px] shrink-0" fill="none">
          <path d="M.7 6 H4 L9 1 V17 L4 12 H.7Z" stroke="#fff" strokeWidth="1.300" />
          <path d="M12 6.500 Q13.500 9 12 11.500" stroke="#fff" strokeWidth="1.200" />
          <path d="M15.500 4 Q18.500 9 15.500 14 M19 1.500 Q23.500 9 19 16.500" stroke="#7b8086" strokeWidth="1.200" />
        </svg>
        <div className="ml-[21px] mt-[2px] flex w-[86px] shrink-0 flex-col items-center whitespace-nowrap text-[18px] leading-[28px] tracking-[-0.55px]">
          <span>6:54 PM</span><span>9/12/2018</span>
        </div>
        <div className="relative ml-[26px] h-[36px] w-[36px] shrink-0">
          <svg width="36" height="37" viewBox="0 0 36 37" className="-mt-[1px]">
            <path d="M1 6 H25 V25 H15 L10.500 30 V25 H1Z" fill="#fff" />
            <path d="M6 11.500 H20 M6 15.500 H20 M6 19.500 H16" stroke="#16202a" strokeWidth="1.300" />
          </svg>
          <div className="absolute left-[12px] top-[16px] flex h-[25px] w-[25px] items-center justify-center rounded-full border border-[#8a8d91] bg-[#20262d] text-[17px] font-semibold">2</div>
        </div>
        <div className="ml-auto h-full w-[8px] shrink-0 border-l-2 border-[#6c7075]" />
      </div>
    </footer>
  );
}

export default function App() {
  return (
    <div className="h-[1080px] w-[1920px] overflow-hidden bg-[#f2f2f2]">
      <header className="h-[145px] bg-[#f2f2f2]">
        <TabStrip />
        <Toolbar />
        <Bookmarks />
      </header>
      <LoginPage />
      <Taskbar />
    </div>
  );
}
